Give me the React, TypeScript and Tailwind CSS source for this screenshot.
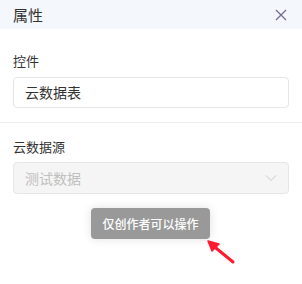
export default function App() {
  return (
    <div className="relative h-[284px] w-[302px] overflow-hidden bg-white font-['Noto_Sans_CJK_SC',sans-serif]">
      <div className="flex h-[29px] items-center justify-between bg-[#f4f7fb] pl-[13px] pr-[15px]">
        <span className="text-[15px] leading-none text-[#333]">属性</span>
        <svg width="12" height="12" viewBox="0 0 12 12" className="text-[#6e6e96]">
          <path d="M1 1L11 11M11 1L1 11" stroke="currentColor" strokeWidth="1.3" />
        </svg>
      </div>

      <div className="px-[13px] pt-[22px]">
        <div className="text-[13px] leading-[20px] text-[#333]">控件</div>
        <div className="mt-[6px] flex h-[31px] items-center rounded-[4px] border border-[#e6e6e6] px-[11px] text-[14px] text-[#333]">
          云数据表
        </div>
      </div>

      <div className="mt-[14px] h-px bg-[#ededed]" />

      <div className="px-[13px] pt-[14px]">
        <div className="text-[13px] leading-[20px] text-[#333]">云数据源</div>
        <div className="mt-[5px] flex h-[32px] items-center justify-between rounded-[4px] border border-[#e6e6e6] bg-[#f5f5f5] pl-[11px] pr-[11px] text-[14px] text-[#c0c0c0]">
          <span>测试数据</span>
          <svg width="12" height="8" viewBox="0 0 12 8">
            <path d="M1 1.5L6 6.5L11 1.5" stroke="#c8c8c8" strokeWidth="1" fill="none" />
          </svg>
        </div>
      </div>

      <div className="absolute left-[91px] top-[208px] flex h-[31px] w-[119px] items-center justify-center rounded-[4px] bg-[#999999] text-[12px] font-medium text-white shadow-[0_0_10px_rgba(0,0,0,0.12)]">
        仅创作者可以操作
      </div>

      <svg className="absolute left-[204px] top-[236px]" width="34" height="30" viewBox="0 0 34 30">
        <path d="M29 26L7 8" stroke="#ff1a2e" strokeWidth="3" strokeLinecap="round" />
        <path d="M4 5L15 8L8 15Z" fill="#ff1a2e" stroke="#ff1a2e" strokeWidth="1.5" strokeLinejoin="round" />
      </svg>
    </div>
  );
}
